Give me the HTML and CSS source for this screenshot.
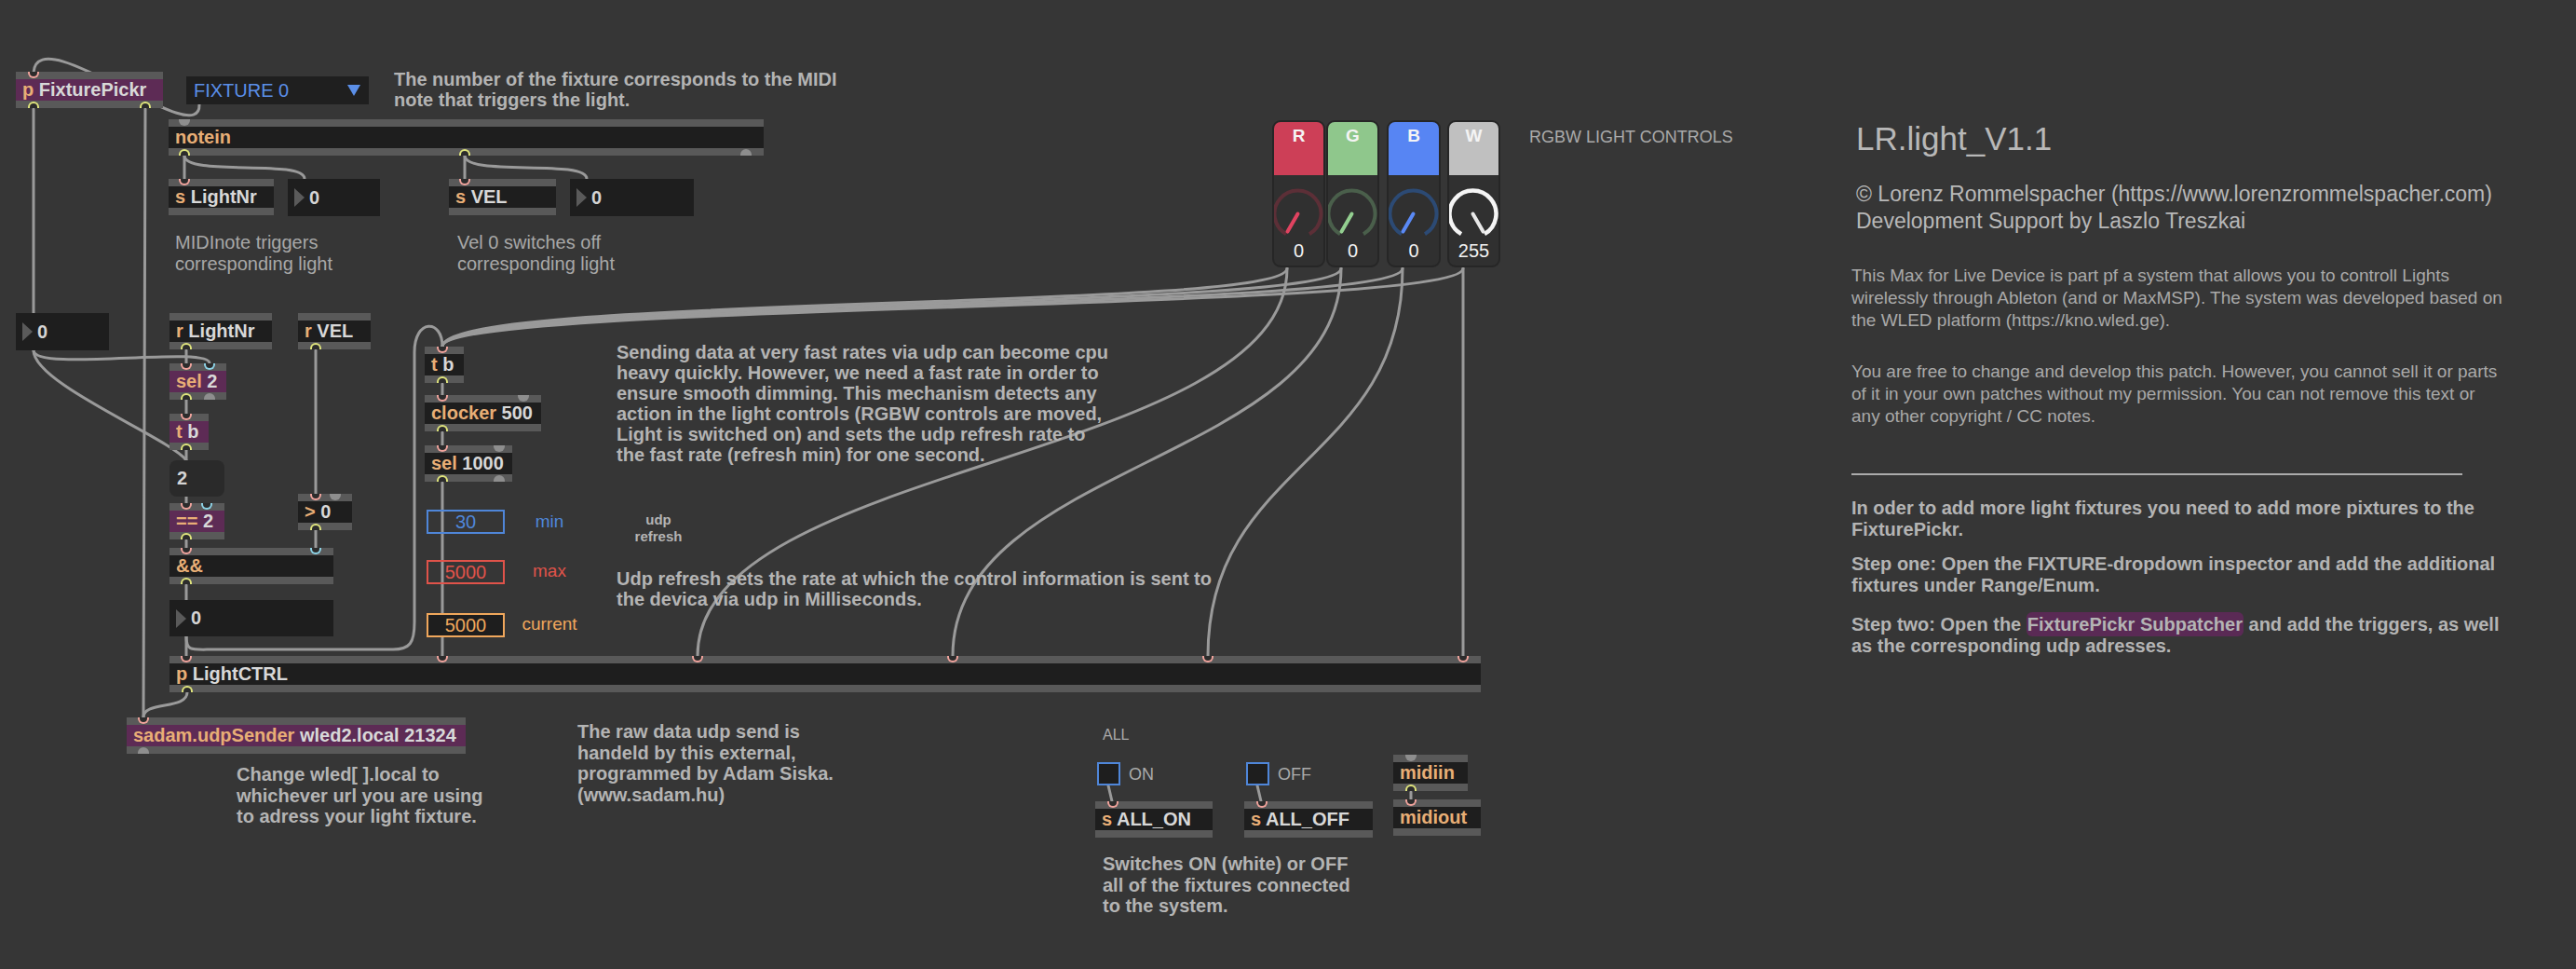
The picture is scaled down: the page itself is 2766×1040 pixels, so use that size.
FILE: index.html
```html
<!DOCTYPE html>
<html>
<head>
<meta charset="utf-8">
<title>LR.light_V1.1</title>
<link rel="stylesheet" href="styles.css">
</head>
<body>
<div class="patch">
  <svg class="cords" width="2766" height="1040" viewBox="0 0 2766 1040">
    <path d="M214 112 C216 165, 40 18, 36 78"/>
    <path d="M36 117 L36 336"/>
    <path d="M156 117 C156 400, 154 500, 154 770"/>
    <path d="M198 167 L198 192"/>
    <path d="M198 167 C198 190, 327 170, 327 192"/>
    <path d="M499 167 L499 192"/>
    <path d="M499 167 C499 190, 630 170, 630 192"/>
    <path d="M36 376 C36 400, 225 370, 225 390"/>
    <path d="M36 376 C36 412, 182 470, 200 494"/>
    <path d="M200 376 L200 390"/>
    <path d="M200 429 L200 444"/>
    <path d="M200 483 L200 494"/>
    <path d="M200 533 L200 540"/>
    <path d="M200 580 L200 588"/>
    <path d="M200 628 L200 644"/>
    <path d="M200 683 L200 704"/>
    <path d="M339 376 L339 530"/>
    <path d="M339 569 L339 588"/>
    <path d="M200 683 C200 700, 206 697, 232 697 L422 697 C440 697, 445 690, 445 668 L445 378 C445 342, 475 342, 475 372"/>
    <path d="M475 412 L475 424"/>
    <path d="M475 464 L475 478"/>
    <path d="M475 518 L475 704"/>
    <path d="M1382 288 C1382 335, 475 315, 475 372"/>
    <path d="M1440 288 C1440 335, 475 318, 475 372"/>
    <path d="M1506 288 C1506 335, 475 321, 475 372"/>
    <path d="M1571 288 C1571 335, 475 324, 475 372"/>
    <path d="M1382 288 C1382 496, 749 496, 749 704"/>
    <path d="M1440 288 C1440 496, 1023 496, 1023 704"/>
    <path d="M1506 288 C1506 496, 1297 496, 1297 704"/>
    <path d="M1571 288 L1571 704"/>
    <path d="M201 743 C201 762, 154 752, 154 770"/>
    <path d="M1190 843 L1194 860"/>
    <path d="M1350 843 L1354 860"/>
    <path d="M1515 850 L1515 858"/>
  </svg>

  <!-- top row -->
  <div class="obj purple o-fix"><span class="k">p</span> FixturePickr<i class="port in"></i><i class="port out"></i><i class="port out p2"></i></div>
  <div class="dropdown">FIXTURE 0<i class="dd-arrow"></i></div>
  <div class="cmt c-fixture">The number of the fixture corresponds to the MIDI<br>note that triggers the light.</div>

  <div class="obj o-notein"><span class="k">notein</span><i class="port in dot"></i><i class="port out"></i><i class="port out p2"></i><i class="port out dot p3"></i></div>
  <div class="obj o-slight"><span class="k">s</span> LightNr<i class="port in"></i></div>
  <div class="numbox nb-1"><i class="tri"></i>0</div>
  <div class="obj o-svel"><span class="k">s</span> VEL<i class="port in"></i></div>
  <div class="numbox nb-2"><i class="tri"></i>0</div>
  <div class="note n-midi">MIDInote triggers<br>corresponding light</div>
  <div class="note n-vel">Vel 0 switches off<br>corresponding light</div>

  <!-- left chain -->
  <div class="numbox nb-0"><i class="tri"></i>0</div>
  <div class="obj o-rlight"><span class="k">r</span> LightNr<i class="port out"></i></div>
  <div class="obj o-rvel"><span class="k">r</span> VEL<i class="port out"></i></div>
  <div class="obj purple o-sel2"><span class="k">sel</span> 2<i class="port in"></i><i class="port in cold p2"></i><i class="port out"></i><i class="port out dot p2"></i></div>
  <div class="obj purple o-tb1"><span class="k">t</span> b<i class="port in"></i><i class="port out"></i></div>
  <div class="msg">2</div>
  <div class="obj purple o-eq"><span class="k">==</span> 2<i class="port in"></i><i class="port in cold p2"></i><i class="port out"></i></div>
  <div class="obj o-gt"><span class="k">&gt;</span> 0<i class="port in"></i><i class="port in dot p2"></i><i class="port out"></i></div>
  <div class="obj o-and"><span class="k">&amp;&amp;</span><i class="port in"></i><i class="port in cold p2"></i><i class="port out"></i></div>
  <div class="numbox nb-3"><i class="tri"></i>0</div>

  <!-- refresh chain -->
  <div class="obj o-tb2"><span class="k">t</span> b<i class="port in"></i><i class="port out"></i></div>
  <div class="obj o-clock"><span class="k">clocker</span> 500<i class="port in"></i><i class="port in dot p2"></i><i class="port out"></i></div>
  <div class="obj o-sel1000"><span class="k">sel</span> 1000<i class="port in"></i><i class="port in dot p2"></i><i class="port out"></i><i class="port out dot p2"></i></div>
  <div class="rate r-min">30</div>
  <div class="rate r-max">5000</div>
  <div class="rate r-cur">5000</div>
  <div class="rlabel l-min">min</div>
  <div class="rlabel l-max">max</div>
  <div class="rlabel l-cur">current</div>
  <div class="cmt small c-udp">udp<br>refresh</div>
  <div class="cmt c-send">Sending data at very fast rates via udp can become cpu<br>heavy quickly. However, we need a fast rate in order to<br>ensure smooth dimming. This mechanism detects any<br>action in the light controls (RGBW controls are moved,<br>Light is switched on) and sets the udp refresh rate to<br>the fast rate (refresh min) for one second.</div>
  <div class="cmt c-udprate">Udp refresh sets the rate at which the control information is sent to<br>the devica via udp in Milliseconds.</div>

  <div class="obj o-ctrl"><span class="k">p</span> LightCTRL<i class="port in"></i><i class="port in p2"></i><i class="port in p3"></i><i class="port in p4"></i><i class="port in p5"></i><i class="port in p6"></i><i class="port out"></i></div>
  <div class="obj purple o-sadam"><span class="k">sadam.udpSender</span> wled2.local 21324<i class="port in"></i><i class="port out dot"></i></div>
  <div class="cmt c-wled">Change wled[ ].local to<br>whichever url you are using<br>to adress your light fixture.</div>
  <div class="cmt c-raw">The raw data udp send is<br>handeld by this external,<br>programmed by Adam Siska.<br>(www.sadam.hu)</div>

  <!-- ALL on / off -->
  <div class="label l-all">ALL</div>
  <div class="toggle t-on"></div>
  <div class="label l-on">ON</div>
  <div class="toggle t-off"></div>
  <div class="label l-off">OFF</div>
  <div class="obj o-allon"><span class="k">s</span> ALL_ON<i class="port in"></i></div>
  <div class="obj o-alloff"><span class="k">s</span> ALL_OFF<i class="port in"></i></div>
  <div class="obj o-midiin"><span class="k">midiin</span><i class="port in dot"></i><i class="port out"></i></div>
  <div class="obj o-midiout"><span class="k">midiout</span><i class="port in"></i></div>
  <div class="cmt c-switch">Switches ON (white) or OFF<br>all of the fixtures connected<br>to the system.</div>

  <!-- RGBW -->
  <div class="rgbw">
    <div class="dial dial-r">
      <div class="dial-head">R</div>
      <div class="dial-body">
        <svg width="57" height="70" viewBox="0 0 57 70"><path class="arc" d="M16 63.15 A25 25 0 1 1 41 63.15"/><path class="needle" d="M28.5 41.5 L17.5 60.6"/></svg>
        <div class="dial-val">0</div>
      </div>
    </div>
    <div class="dial dial-g">
      <div class="dial-head">G</div>
      <div class="dial-body">
        <svg width="57" height="70" viewBox="0 0 57 70"><path class="arc" d="M16 63.15 A25 25 0 1 1 41 63.15"/><path class="needle" d="M28.5 41.5 L17.5 60.6"/></svg>
        <div class="dial-val">0</div>
      </div>
    </div>
    <div class="dial dial-b">
      <div class="dial-head">B</div>
      <div class="dial-body">
        <svg width="57" height="70" viewBox="0 0 57 70"><path class="arc" d="M16 63.15 A25 25 0 1 1 41 63.15"/><path class="needle" d="M28.5 41.5 L17.5 60.6"/></svg>
        <div class="dial-val">0</div>
      </div>
    </div>
    <div class="dial dial-w">
      <div class="dial-head">W</div>
      <div class="dial-body">
        <svg width="57" height="70" viewBox="0 0 57 70"><path class="arc" d="M16 63.15 A25 25 0 1 1 41 63.15"/><path class="needle" d="M28.5 41.5 L39.5 60.6"/></svg>
        <div class="dial-val">255</div>
      </div>
    </div>
  </div>
  <div class="label l-rgbw">RGBW LIGHT CONTROLS</div>

  <!-- info column -->
  <div class="info">
    <div class="info-title">LR.light_V1.1</div>
    <div class="info-credit">© Lorenz Rommelspacher (https://www.lorenzrommelspacher.com)<br>Development Support by Laszlo Treszkai</div>
    <div class="info-p">This Max for Live Device is part pf a system that allows you to controll Lights<br>wirelessly through Ableton (and or MaxMSP). The system was developed based on<br>the WLED platform (https://kno.wled.ge).</div>
    <div class="info-p info-p2">You are free to change and develop this patch. However, you cannot sell it or parts<br>of it in your own patches without my permission. You can not remove this text or<br>any other copyright / CC notes.</div>
    <div class="info-rule"></div>
    <div class="info-b">In oder to add more light fixtures you need to add more pixtures to the<br>FixturePickr.</div>
    <div class="info-b info-b2">Step one: Open the FIXTURE-dropdown inspector and add the additional<br>fixtures under Range/Enum.</div>
    <div class="info-b info-b3">Step two: Open the <span class="hl">FixturePickr Subpatcher</span> and add the triggers, as well<br>as the corresponding udp adresses.</div>
  </div>
</div>
</body>
</html>
```

FILE: styles.css
```css
* { box-sizing: border-box; }
body { margin: 0; background: #363636; }

.patch {
  position: relative;
  width: 2766px;
  height: 1040px;
  overflow: hidden;
  background: #363636;
  font-family: "Liberation Sans", Arial, sans-serif;
}

.cords { position: absolute; left: 0; top: 0; }
.cords path { fill: none; stroke: #9a9a9a; stroke-width: 3; stroke-linecap: round; }

/* patch objects */
.obj {
  position: absolute;
  height: 39px;
  border-top: 8px solid #595959;
  border-bottom: 8px solid #595959;
  background: #1e1e1e;
  padding-left: 7px;
  font-weight: 700;
  font-size: 20px;
  line-height: 23px;
  color: #d8d8d8;
  white-space: nowrap;
}
.obj.purple { background: #5d2b55; }
.k { color: #e8ae76; }

.port { position: absolute; left: 12px; width: 12px; height: 7px; display: block; }
.port.in { top: -8px; border: 2px solid #f0a39c; border-top: 0; border-radius: 0 0 6px 6px; background: #2c2c2c; }
.port.in.cold { border-color: #8dd3e6; }
.port.out { bottom: -8px; border: 2px solid #dfe47c; border-bottom: 0; border-radius: 6px 6px 0 0; background: #2c2c2c; }
.port.dot { background: #8e8e8e; border: 0; }

.o-fix { left: 17px; top: 77px; width: 158px; }
.o-fix .port { left: 13px; }
.o-fix .out.p2 { left: 133px; }

.o-notein { left: 181px; top: 128px; width: 639px; }
.o-notein .port { left: 11px; }
.o-notein .out.p2 { left: 312px; }
.o-notein .out.p3 { left: 614px; }

.o-slight { left: 181px; top: 192px; width: 113px; }
.o-slight .port { left: 11px; }
.o-svel { left: 482px; top: 192px; width: 115px; }
.o-svel .port { left: 11px; }

.o-rlight { left: 182px; top: 336px; width: 110px; }
.o-rvel { left: 320px; top: 336px; width: 78px; }
.o-rvel .port { left: 13px; }

.o-sel2 { left: 182px; top: 390px; width: 61px; }
.o-sel2 .p2 { left: 37px; }
.o-tb1 { left: 182px; top: 444px; width: 42px; }
.o-eq { left: 182px; top: 540px; width: 59px; }
.o-eq .p2 { left: 34px; }
.o-gt { left: 320px; top: 530px; width: 58px; }
.o-gt .port { left: 13px; }
.o-gt .p2 { left: 34px; }
.o-and { left: 182px; top: 588px; width: 176px; }
.o-and .p2 { left: 151px; }

.o-tb2 { left: 456px; top: 372px; width: 42px; }
.o-tb2 .port { left: 13px; }
.o-clock { left: 456px; top: 424px; width: 125px; }
.o-clock .port { left: 13px; }
.o-clock .p2 { left: 100px; }
.o-sel1000 { left: 456px; top: 478px; width: 94px; }
.o-sel1000 .port { left: 13px; }
.o-sel1000 .p2 { left: 74px; }

.o-ctrl { left: 182px; top: 704px; width: 1408px; }
.o-ctrl .in.p2 { left: 287px; }
.o-ctrl .in.p3 { left: 561px; }
.o-ctrl .in.p4 { left: 835px; }
.o-ctrl .in.p5 { left: 1109px; }
.o-ctrl .in.p6 { left: 1383px; }
.o-ctrl .out { left: 13px; }

.o-sadam { left: 136px; top: 770px; width: 364px; padding-left: 7px; }

.o-allon { left: 1176px; top: 860px; width: 126px; }
.o-allon .port { left: 13px; }
.o-alloff { left: 1336px; top: 860px; width: 138px; }
.o-alloff .port { left: 13px; }
.o-midiin { left: 1496px; top: 810px; width: 80px; }
.o-midiin .port { left: 13px; }
.o-midiout { left: 1496px; top: 858px; width: 94px; }
.o-midiout .port { left: 13px; }

/* number boxes */
.numbox {
  position: absolute;
  display: flex;
  align-items: center;
  background: #1e1e1e;
  padding-left: 7px;
  font-weight: 700;
  font-size: 20px;
  color: #d4d4d4;
}
.numbox .tri {
  display: block;
  width: 0; height: 0;
  border-left: 11px solid #5a5a5a;
  border-top: 10px solid transparent;
  border-bottom: 10px solid transparent;
  margin-right: 5px;
}
.nb-0 { left: 17px; top: 336px; width: 100px; height: 40px; }
.nb-1 { left: 309px; top: 192px; width: 99px; height: 40px; }
.nb-2 { left: 612px; top: 192px; width: 133px; height: 40px; }
.nb-3 { left: 182px; top: 644px; width: 176px; height: 39px; }

.msg {
  position: absolute;
  left: 182px; top: 494px; width: 59px; height: 39px;
  background: #2a2a2a;
  border-radius: 8px;
  padding-left: 8px;
  font-weight: 700;
  font-size: 20px;
  line-height: 39px;
  color: #d4d4d4;
}

.dropdown {
  position: absolute;
  left: 200px; top: 82px; width: 196px; height: 30px;
  background: #1f1f1f;
  color: #5b8fe8;
  font-size: 20px;
  line-height: 30px;
  padding-left: 8px;
}
.dd-arrow {
  position: absolute;
  right: 9px; top: 9px;
  width: 0; height: 0;
  border-top: 12px solid #5b8fe8;
  border-left: 7px solid transparent;
  border-right: 7px solid transparent;
}

/* rate boxes */
.rate {
  position: absolute;
  left: 458px; width: 84px; height: 26px;
  border: 2px solid;
  text-align: center;
  font-size: 20px;
  line-height: 22px;
}
.r-min { top: 547px; border-color: #4f86d9; color: #4f86d9; }
.r-max { top: 601px; border-color: #e0534a; color: #e0534a; }
.r-cur { top: 658px; border-color: #f0a75c; color: #f0a75c; background: #1e1e1e; }
.rlabel {
  position: absolute;
  left: 550px; width: 80px;
  text-align: center;
  font-size: 19px;
  line-height: 22px;
}
.l-min { top: 549px; color: #4f86d9; }
.l-max { top: 602px; color: #e0534a; }
.l-cur { top: 659px; color: #f0a75c; }

/* comments */
.cmt {
  position: absolute;
  font-weight: 700;
  font-size: 20px;
  line-height: 22px;
  color: #b4b4b4;
  white-space: nowrap;
}
.cmt.small { font-size: 15px; line-height: 18px; text-align: center; width: 80px; }
.c-fixture { left: 423px; top: 74px; }
.c-send { left: 662px; top: 367px; }
.c-udp { left: 667px; top: 549px; }
.c-udprate { left: 662px; top: 610px; }
.c-wled { left: 254px; top: 820px; line-height: 22.5px; }
.c-raw { left: 620px; top: 774px; line-height: 22.5px; }
.c-switch { left: 1184px; top: 916px; line-height: 22.5px; }

.note {
  position: absolute;
  font-size: 20px;
  line-height: 23px;
  color: #a8a8a8;
  white-space: nowrap;
}
.n-midi { left: 188px; top: 249px; }
.n-vel { left: 491px; top: 249px; }

.label {
  position: absolute;
  color: #aaaaaa;
  white-space: nowrap;
  font-size: 18px;
  line-height: 22px;
}
.l-all { left: 1184px; top: 778px; font-size: 16px; }
.l-on { left: 1212px; top: 820px; }
.l-off { left: 1372px; top: 820px; }
.l-rgbw { left: 1642px; top: 136px; }

.toggle {
  position: absolute;
  top: 818px; width: 25px; height: 25px;
  border: 2px solid #4f86d9;
  background: #1e1e1e;
}
.t-on { left: 1178px; }
.t-off { left: 1338px; }

/* RGBW dials */
.rgbw {
  position: absolute;
  left: 1366px; top: 129px;
  display: flex;
}
.dial {
  width: 57px; height: 158px;
  border: 2px solid #262626;
  border-radius: 9px;
  overflow: hidden;
  background: #303030;
  display: flex;
  flex-direction: column;
}
.dial-g { margin-left: 1px; }
.dial-b { margin-left: 8px; width: 58px; }
.dial-w { margin-left: 7px; }
.dial-head {
  height: 57px;
  text-align: center;
  color: #f4f4f4;
  font-weight: 700;
  font-size: 19px;
  line-height: 30px;
}
.dial-body { flex: 1; display: flex; flex-direction: column; align-items: center; }
.dial-body svg { display: block; margin-left: -2px; }
.dial-val { color: #f2f2f2; font-size: 20px; line-height: 22px; }
.arc { fill: none; stroke-width: 4; stroke-linecap: butt; }
.needle { fill: none; stroke-width: 4; stroke-linecap: round; }
.dial-r .dial-head { background: #cd3f57; }
.dial-r .arc { stroke: #5c2f37; }
.dial-r .needle { stroke: #e04360; }
.dial-g .dial-head { background: #8fc78c; }
.dial-g .arc { stroke: #4a5f4b; }
.dial-g .needle { stroke: #93cf90; }
.dial-b .dial-head { background: #5785f3; }
.dial-b .arc { stroke: #2c4a74; }
.dial-b .needle { stroke: #5a89f5; }
.dial-w .dial-head { background: #c0c0c0; }
.dial-w .arc { stroke: #f4f4f4; stroke-width: 4.5; }
.dial-w .needle { stroke: #e8e8e8; }

/* info column */
.info {
  position: absolute;
  left: 1988px; top: 129px;
  width: 760px;
  display: flex;
  flex-direction: column;
  white-space: nowrap;
}
.info-title { padding-left: 5px; font-size: 35px; line-height: 40px; color: #b8b8b8; }
.info-credit { margin-top: 25px; padding-left: 5px; font-size: 23px; line-height: 29px; color: #b8b8b8; }
.info-p { margin-top: 32px; font-size: 19px; line-height: 24px; color: #a9a9a9; }
.info-p2 { margin-top: 31px; }
.info-rule { margin-top: 49px; width: 656px; height: 2px; background: #ababab; }
.info-b { margin-top: 24px; font-weight: 700; font-size: 20px; line-height: 23px; color: #b4b4b4; }
.info-b2 { margin-top: 14px; }
.info-b3 { margin-top: 19px; }
.hl { background: #5a2a55; border-radius: 6px; padding: 2px 1px; }
```
